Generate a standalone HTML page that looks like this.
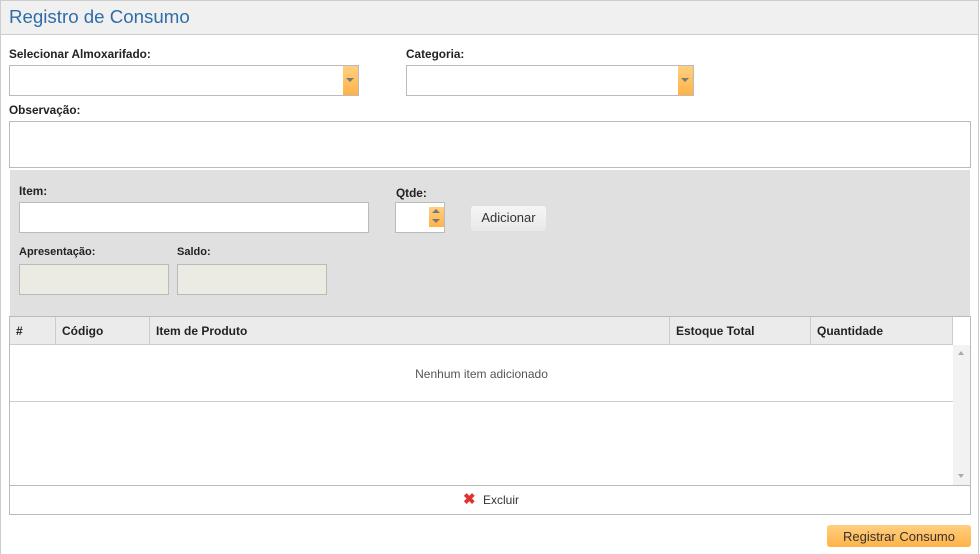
<!DOCTYPE html>
<html><head><meta charset="utf-8"><style>
*{box-sizing:border-box;margin:0;padding:0}
body{width:980px;height:554px;background:#fff;font-family:"Segoe UI","Liberation Sans",sans-serif;font-size:12px;color:#333;position:relative;overflow:hidden}
.a{position:absolute}
.lbl{font-weight:bold;font-size:11.8px;color:#222}
.inp{background:#fff;border:1px solid #bbb}
.dd{background:linear-gradient(#ffcf80,#ffb347);}
.tri{width:0;height:0;border-left:4px solid transparent;border-right:4px solid transparent;border-top:4px solid #777}
.th{font-weight:bold;color:#222;border-right:1px solid #ccc;padding:7px 6px;height:28px}
</style></head><body>
<div class="a" style="left:0;top:0;width:979px;height:554px;border:1px solid #ccc;border-bottom:none"></div>
<div class="a" style="left:1px;top:1px;width:977px;height:34px;background:#f0f0f0;border-bottom:1px solid #ccc"></div>
<div class="a" style="left:9px;top:6px;font-size:18.7px;color:#2f6da8">Registro de Consumo</div>

<div class="a lbl" style="left:9px;top:47px">Selecionar Almoxarifado:</div>
<div class="a inp" style="left:9px;top:65px;width:350px;height:31px"></div>
<div class="a dd" style="left:343px;top:66px;width:15px;height:29px"><div class="tri" style="margin:12px 0 0 3px"></div></div>
<div class="a lbl" style="left:406px;top:47px">Categoria:</div>
<div class="a inp" style="left:406px;top:65px;width:288px;height:31px"></div>
<div class="a dd" style="left:678px;top:66px;width:15px;height:29px"><div class="tri" style="margin:12px 0 0 3px"></div></div>

<div class="a lbl" style="left:9px;top:103px">Observação:</div>
<div class="a inp" style="left:9px;top:121px;width:962px;height:47px"></div>

<div class="a" style="left:10px;top:170px;width:960px;height:147px;background:#e0e0e0"></div>
<div class="a lbl" style="left:19px;top:184px">Item:</div>
<div class="a inp" style="left:19px;top:202px;width:350px;height:31px"></div>
<div class="a lbl" style="left:396px;top:186px">Qtde:</div>
<div class="a inp" style="left:395px;top:202px;width:50px;height:31px"></div>
<div class="a dd" style="left:429px;top:207px;width:15px;height:20px">
<div style="width:0;height:0;border-left:4px solid transparent;border-right:4px solid transparent;border-bottom:4px solid #777;margin:2px 0 0 3px"></div>
<div class="tri" style="margin:6px 0 0 3px"></div></div>
<div class="a" style="left:471px;top:206px;width:75px;height:25px;background:linear-gradient(#f6f6f6,#e8e8e8);border-radius:3px;text-align:center;line-height:24px;font-size:13px">Adicionar</div>
<div class="a lbl" style="left:19px;top:246px;font-size:11px">Apresentação:</div>
<div class="a" style="left:19px;top:264px;width:150px;height:31px;background:#ebebe4;border:1px solid #bbb"></div>
<div class="a lbl" style="left:177px;top:246px;font-size:11px">Saldo:</div>
<div class="a" style="left:177px;top:264px;width:150px;height:31px;background:#ebebe4;border:1px solid #bbb"></div>

<div class="a" style="left:9px;top:316px;width:962px;height:199px;border:1px solid #bbb"></div>
<div class="a" style="left:10px;top:317px;width:943px;height:28px;background:#ebebeb;display:flex;border-bottom:1px solid #ccc">
<div class="th" style="width:46px">#</div><div class="th" style="width:94px">Código</div><div class="th" style="width:520px">Item de Produto</div><div class="th" style="width:141px">Estoque Total</div><div class="th" style="width:142px">Quantidade</div></div>
<div class="a" style="left:953px;top:345px;width:17px;height:140px;background:#f2f2f2"></div>
<div class="a" style="left:958px;top:351px;border-left:3px solid transparent;border-right:3px solid transparent;border-bottom:4px solid #aaa"></div>
<div class="a" style="left:958px;top:474px;border-left:3px solid transparent;border-right:3px solid transparent;border-top:4px solid #aaa"></div>
<div class="a" style="left:10px;top:367px;width:943px;text-align:center;color:#555">Nenhum item adicionado</div>
<div class="a" style="left:10px;top:401px;width:943px;border-top:1px solid #ccc"></div>
<div class="a" style="left:10px;top:485px;width:960px;border-top:1px solid #bbb"></div>
<div class="a" style="left:463px;top:491px;color:#d33;font-size:15px;font-weight:bold;line-height:18px">✖</div>
<div class="a" style="left:483px;top:493px;color:#333">Excluir</div>

<div class="a" style="left:827px;top:525px;width:144px;height:22px;background:linear-gradient(#ffcf80,#ffb347);border-radius:3px;text-align:center;line-height:23px;font-size:13px;color:#333">Registrar Consumo</div>
</body></html>
